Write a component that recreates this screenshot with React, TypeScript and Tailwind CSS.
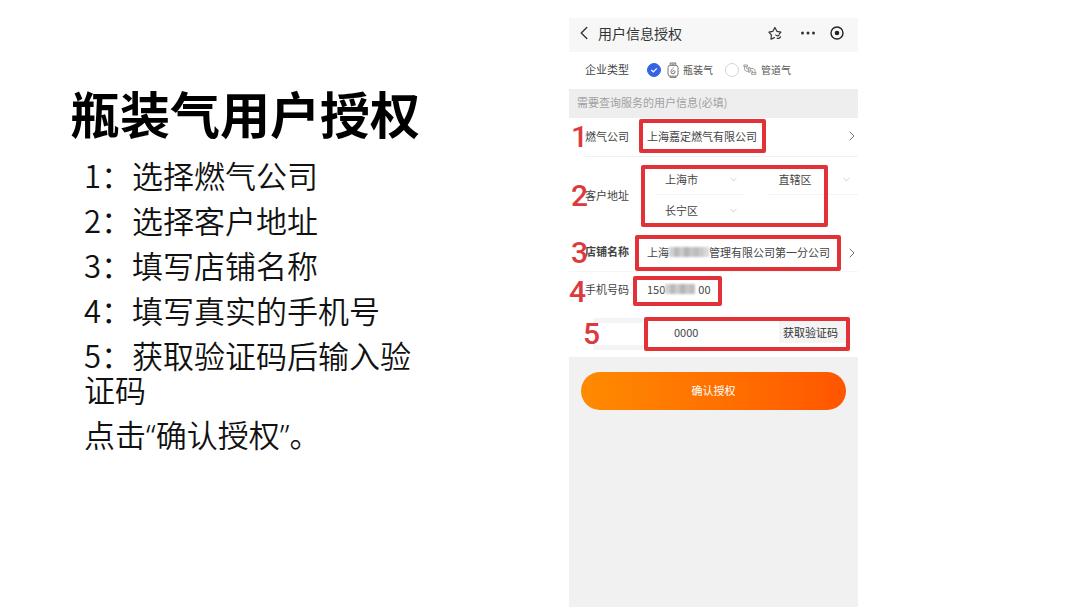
import React, { useState } from 'react';
import { ChevronDown, ChevronLeft, ChevronRight } from 'lucide-react';

const steps = ['1：选择燃气公司', '2：选择客户地址', '3：填写店铺名称', '4：填写真实的手机号', '5：获取验证码后输入验证码'];

const mosaicShades = [
  'bg-[#d2d2d2]',
  'bg-[#b9b9b9]',
  'bg-[#cbcbcb]',
  'bg-[#b4b4b4]',
  'bg-[#c6c6c6]',
  'bg-[#bdbdbd]',
  'bg-[#c9c9c9]',
  'bg-[#dadada]',
];

const Mosaic: React.FC<{ count: number }> = ({ count }) => (
  <span className="inline-flex blur-[1px]" aria-hidden>
    {mosaicShades.slice(0, count).map((shade) => (
      <span key={shade} className={`h-[10px] w-[5px] ${shade}`} />
    ))}
  </span>
);

const StepMark: React.FC<{ value: number; className: string }> = ({ value, className }) => (
  <span
    className={`absolute top-1/2 -translate-y-1/2 font-['Roboto',sans-serif] text-[30px] leading-none font-medium text-[#dc3a40] ${className}`}
  >
    {value}
  </span>
);

const StarIcon = () => (
  <svg viewBox="0 0 14 14" className="h-[14px] w-[14px]" fill="none" stroke="#333" strokeWidth="1.2" strokeLinejoin="round" strokeLinecap="round">
    <path d="M6.4 11.6 3 13.2l.4-4L.9 6.1l4-.8 2-3.800 2 3.800 4 .8-1.700 2" />
    <path d="M7.800 9c.8 1 2.200 1.100 3.200.2M9.200 12.400c1.400.2 2.600-.4 3.400-1.600" />
  </svg>
);

const BottleIcon = () => (
  <svg viewBox="0 0 12 16" className="h-4 w-3" fill="none" stroke="#666" strokeWidth="0.9" strokeLinejoin="round">
    <path d="M3.2 3.400V1h5.600v2.400M4.600 2.200h2.800" />
    <rect x="1" y="3.400" width="10" height="10.800" rx="2.200" />
    <path d="M3 14.200v1.200h6v-1.200" />
    <path d="M6.600 5.800C5.400 7 4 8 4 9.800a2 2 0 0 0 4 0c0-1-.8-1.400-1.600-1.200-.8.2-.9 1.200-.2 1.600" />
  </svg>
);

const PipeIcon = () => (
  <svg viewBox="0 0 14 14" className="h-[14px] w-[14px]" fill="none" stroke="#8a8a8a" strokeWidth="0.8">
    <path d="M.8 2h3.600v1.600H.8zM1.600 3.600v3.200l1.200 1.400h2.800M3.800 3.600v2.200h1.800" />
    <path d="M5.600 4.600h1.600v4.600H5.600zM7.200 5.600h3.200l1.600 1.400v2.600M7.200 7.800h2.200v1.800" />
    <path d="M8.600 9.600H13v1.800H8.600z" />
  </svg>
);

const AddressSelect: React.FC<{ label: string; value: string }> = ({ label, value }) => (
  <div className="relative flex h-[31px] items-center border-b border-[#f3f3f3]">
    <select aria-label={label} defaultValue={value} className="w-full appearance-none bg-transparent pl-2.5 text-[11px] text-[#444] outline-none">
      <option>{value}</option>
    </select>
    <ChevronDown className="pointer-events-none absolute right-1.5 h-[11px] w-[11px] text-[#bbb]" strokeWidth={1.5} />
  </div>
);

export default function App() {
  const [gasType, setGasType] = useState('bottle');
  const [phone, setPhone] = useState('150\u2003\u2003\u200300');
  const [code, setCode] = useState('0000');

  const radioClass =
    'h-[14px] w-[14px] appearance-none rounded-full border border-[#d5d5d5] bg-white checked:border-[#3463e6] checked:bg-[#3463e6]';
  const rowClass = 'relative flex items-center';
  const labelClass = 'w-11 shrink-0 text-[11px] whitespace-nowrap text-[#444]';

  return (
    <main className="grid min-h-screen grid-cols-[569fr_289fr_222fr] bg-white font-['Noto_Sans_CJK_SC',sans-serif]">
      <section className="pt-[82px] pl-[70px]">
        <h1 className="text-[50px] leading-[60px] font-bold text-black">瓶装气用户授权</h1>
        <div className="flex max-w-[356px] flex-col gap-[11px] pt-4 pl-[14px] text-[31px] leading-[34px] font-[350] text-[#111]">
          {steps.map((step) => (
            <p key={step}>{step}</p>
          ))}
          <p>
            点击<span className="font-['Noto_Sans',sans-serif]">“</span>确认授权
            <span className="font-['Noto_Sans',sans-serif]">”</span>。
          </p>
        </div>
      </section>

      <section className="mt-[18px] flex flex-col bg-[#f1f1f1]">
        <header className="flex h-[34px] items-center bg-[#f7f7f7] pr-[14px] pb-1 pl-1 text-[#333]">
          <button type="button" aria-label="返回" className="shrink-0">
            <ChevronLeft className="h-[22px] w-[22px]" strokeWidth={1.5} />
          </button>
          <h2 className="ml-[3px] flex-1 text-[14px] leading-5 whitespace-nowrap">用户信息授权</h2>
          <button type="button" aria-label="收藏">
            <StarIcon />
          </button>
          <button type="button" aria-label="更多" className="ml-[18px]">
            <svg viewBox="0 0 16 14" className="h-[14px] w-4" fill="#333">
              <circle cx="2.500" cy="7" r="1.500" />
              <circle cx="8" cy="7" r="1.500" />
              <circle cx="13.500" cy="7" r="1.500" />
            </svg>
          </button>
          <button type="button" aria-label="关闭" className="ml-[14px]">
            <svg viewBox="0 0 14 14" className="h-[14px] w-[14px]">
              <circle cx="7" cy="7" r="6" fill="none" stroke="#222" strokeWidth="1.400" />
              <circle cx="7" cy="7" r="2.300" fill="#222" />
            </svg>
          </button>
        </header>

        <form onSubmit={(e) => e.preventDefault()}>
          <fieldset className="flex h-[37px] items-center bg-white pb-0.5 pl-4 text-[10px] text-[#555]">
            <span className={labelClass}>企业类型</span>
            <label className="ml-[18px] flex items-center whitespace-nowrap">
              <span className="relative mr-1.5 flex">
                <input type="radio" name="gas" checked={gasType === 'bottle'} onChange={() => setGasType('bottle')} className={radioClass} />
                {gasType === 'bottle' && (
                  <svg viewBox="0 0 14 14" className="pointer-events-none absolute inset-0" fill="none" stroke="#fff" strokeWidth="1.200">
                    <path d="m4.300 7 2 2 3.500-3.600" />
                  </svg>
                )}
              </span>
              <BottleIcon />
              <span className="ml-1">瓶装气</span>
            </label>
            <label className="ml-3 flex items-center whitespace-nowrap">
              <input type="radio" name="gas" checked={gasType === 'pipe'} onChange={() => setGasType('pipe')} className={`mr-1 ${radioClass}`} />
              <PipeIcon />
              <span className="ml-1">管道气</span>
            </label>
          </fieldset>

          <p className="flex h-[29px] items-center bg-[#eeeeef] pb-0.5 pl-2 text-[11px] whitespace-nowrap text-[#a0a0a0]">
            需要查询服务的用户信息(必填)
          </p>

          <div className="bg-white">
            <div className={`${rowClass} h-[38px] pb-0.5 pl-4`}>
              <span className={labelClass}>燃气公司</span>
              <StepMark value={1} className="left-[2px]" />
              <button type="button" className="ml-2.5 h-[34px] w-[127px] rounded-xs border-4 border-[#e23237] pl-1 text-left text-[11px] whitespace-nowrap text-[#444]">
                上海嘉定燃气有限公司
              </button>
              <ChevronRight className="mr-[-2px] ml-auto h-4 w-4 text-[#777]" strokeWidth={1.5} />
            </div>

            <div className={`${rowClass} ml-4 h-[79px] border-t border-[#f0f0f0] pb-0.5`}>
              <span className={labelClass}>客户地址</span>
              <StepMark value={2} className="left-[-14px]" />
              <div className="ml-[26px] grid flex-1 grid-cols-2 gap-x-6">
                <AddressSelect label="城市" value="上海市" />
                <AddressSelect label="区划" value="直辖区" />
                <AddressSelect label="区县" value="长宁区" />
              </div>
              <div className="pointer-events-none absolute inset-y-2 left-14 w-[187px] rounded-xs border-4 border-[#e23237]" />
            </div>

            <div className={`${rowClass} h-9 pl-4`}>
              <span className={`${labelClass} pb-1 font-bold`}>店铺名称</span>
              <StepMark value={3} className="left-[2px]" />
              <button
                type="button"
                className="ml-1.5 flex h-9 w-[206px] items-center rounded-xs border-4 border-[#e23237] pb-0.5 pl-2 text-[11px] whitespace-nowrap text-[#444]"
              >
                上海
                <Mosaic count={8} />
                管理有限公司第一分公司
              </button>
              <ChevronRight className="mr-[-2px] ml-auto h-4 w-4 text-[#777]" strokeWidth={1.5} />
            </div>

            <div className={`${rowClass} h-10 border-t border-[#f6f6f6] pb-0.5 pl-4`}>
              <label htmlFor="phone" className={`${labelClass} pb-0.5`}>
                手机号码
              </label>
              <StepMark value={4} className="left-0" />
              <div className="relative ml-1 flex h-[30px] w-[89px] items-center rounded-xs border-4 border-[#e23237] pb-1">
                <input
                  id="phone"
                  type="tel"
                  value={phone}
                  onChange={(e) => setPhone(e.target.value)}
                  className="w-full pl-2.5 text-[11px] leading-4 text-[#444] outline-none"
                />
                <span className="pointer-events-none absolute left-7 flex">
                  <Mosaic count={6} />
                </span>
              </div>
            </div>

            <div className={`${rowClass} h-[46px] pr-2 pl-4`}>
              <span className="mr-px ml-2 h-8 w-[50px] border-y-[5px] border-[#f4f4f4]" />
              <StepMark value={5} className="left-[14px]" />
              <div className="flex h-[34px] flex-1 items-center rounded-xs border-4 border-[#e23237] pb-1">
                <input
                  aria-label="验证码"
                  value={code}
                  onChange={(e) => setCode(e.target.value)}
                  className="w-0 flex-1 pl-[26px] text-[11px] leading-4 text-[#444] outline-none"
                />
                <button type="button" className="h-[22px] bg-[#f4f4f4] pr-2 pl-1 text-[11px] whitespace-nowrap text-[#333]">
                  获取验证码
                </button>
              </div>
            </div>
          </div>

          <div className="px-3 pt-[15px]">
            <button type="submit" className="h-[38px] w-full rounded-full bg-linear-to-r from-[#ff8a00] to-[#ff5500] pb-0.5 text-[11px] text-white">
              确认授权
            </button>
          </div>
        </form>
      </section>
    </main>
  );
}
